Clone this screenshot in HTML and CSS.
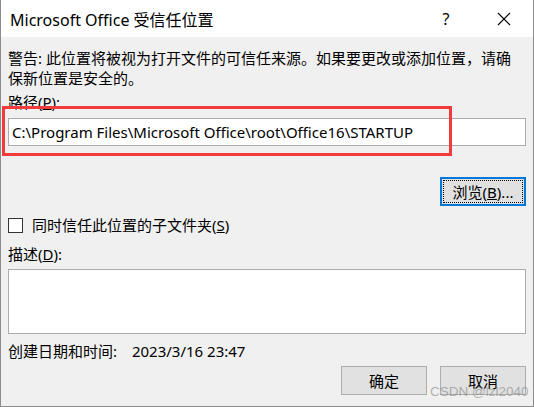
FILE: index.html
```html
<!DOCTYPE html>
<html lang="zh-CN">
<head>
  <meta charset="UTF-8">
  <title>Microsoft Office 受信任位置</title>
  <link rel="stylesheet" href="styles.css">
</head>
<body>

  <div class="window">
    <!-- Title bar -->
    <div class="titlebar">
      <span class="title">Microsoft Office 受信任位置</span>
      <span class="help">?</span>
      <span class="close">
        <svg width="14" height="14" viewBox="0 0 14 14"><path d="M1 1 L13 13 M13 1 L1 13" stroke="#000" stroke-width="1.1" fill="none"/></svg>
      </span>
    </div>

    <!-- Dialog body -->
    <div class="body">
      <p class="warning">警告: 此位置将被视为打开文件的可信任来源。如果要更改或添加位置，请确保新位置是安全的。</p>

      <div class="field-label">路径(<u>P</u>):</div>
      <div class="textbox path">C:\Program Files\Microsoft Office\root\Office16\STARTUP</div>

      <div class="browse-row">
        <button class="btn focused"><span class="focus-rect">浏览(<u>B</u>)...</span></button>
      </div>

      <div class="check-row">
        <span class="checkbox"></span>
        <span>同时信任此位置的子文件夹(<u>S</u>)</span>
      </div>

      <div class="field-label">描述(<u>D</u>):</div>
      <div class="textbox desc"></div>

      <div class="created">
        <span class="created-label">创建日期和时间:</span>
        <span>2023/3/16 23:47</span>
      </div>

      <div class="actions">
        <button class="btn">确定</button>
        <button class="btn">取消</button>
      </div>
    </div>

    <!-- annotation + watermark on top -->
    <div class="highlight"></div>
    <div class="watermark">CSDN @lzl2040</div>
  </div>

</body>
</html>
```

FILE: styles.css
```css
* {
  box-sizing: border-box;
}

body {
  margin: 0;
  padding: 0;
  background-color: #ffffff;
  font-family: "Noto Sans", "Noto Sans CJK SC", sans-serif;
  font-size: 15px;
  color: #000;
}

.window {
  position: relative;
  width: 534px;
  height: 407px;
  background-color: #f0f0f0;
  border: 1px solid #8c8c8c;
  border-top: none;
  overflow: hidden;
}

.titlebar {
  display: flex;
  align-items: center;
  height: 37px;
  background-color: #ffffff;
}

.title {
  flex: 1;
  padding-left: 9px;
  font-size: 16px;
}

.help {
  width: 46px;
  text-align: center;
  font-size: 16px;
  margin-right: 12px;
}

.close {
  display: flex;
  justify-content: center;
  width: 46px;
  margin-right: 6px;
}

.body {
  padding: 11px 7px 0 7px;
}

.warning {
  margin: 0;
  max-width: 510px;
  line-height: 20px;
}

.field-label {
  line-height: 20px;
  margin-top: 4px;
}

.textbox {
  background-color: #ffffff;
  border: 1px solid #acacac;
}

.path {
  height: 28px;
  margin-top: 6px;
  padding: 0 3px;
  line-height: 26px;
  white-space: nowrap;
}

.desc {
  height: 65px;
  margin-top: 5px;
}

.browse-row {
  display: flex;
  justify-content: flex-end;
  margin-top: 31px;
}

.btn {
  width: 86px;
  height: 29px;
  padding: 0;
  background-color: #e1e1e1;
  border: 1px solid #adadad;
  font-family: inherit;
  font-size: 15px;
  color: #000;
}

.btn.focused {
  border: 2px solid #0078d7;
  padding: 1px;
}

.focus-rect {
  display: flex;
  align-items: center;
  justify-content: center;
  height: 100%;
  border: 1px dotted #000;
}

.check-row {
  display: flex;
  align-items: center;
  gap: 9px;
  margin-top: 9px;
  line-height: 20px;
}

.checkbox {
  width: 15px;
  height: 15px;
  border: 1px solid #333;
  background-color: #ffffff;
}

.check-row + .field-label {
  margin-top: 9px;
}

.created {
  margin-top: 7px;
  line-height: 20px;
}

.created-label {
  margin-right: 11px;
}

.actions {
  display: flex;
  justify-content: flex-end;
  gap: 13px;
  margin-top: 5px;
}

.highlight {
  position: absolute;
  left: 1px;
  top: 106px;
  width: 450px;
  height: 50px;
  border: 3px solid #f23c3c;
}

.watermark {
  position: absolute;
  left: 429px;
  top: 384px;
  white-space: nowrap;
  font-family: "Liberation Sans", sans-serif;
  font-size: 13.5px;
  color: rgba(120, 120, 120, 0.55);
}
```
